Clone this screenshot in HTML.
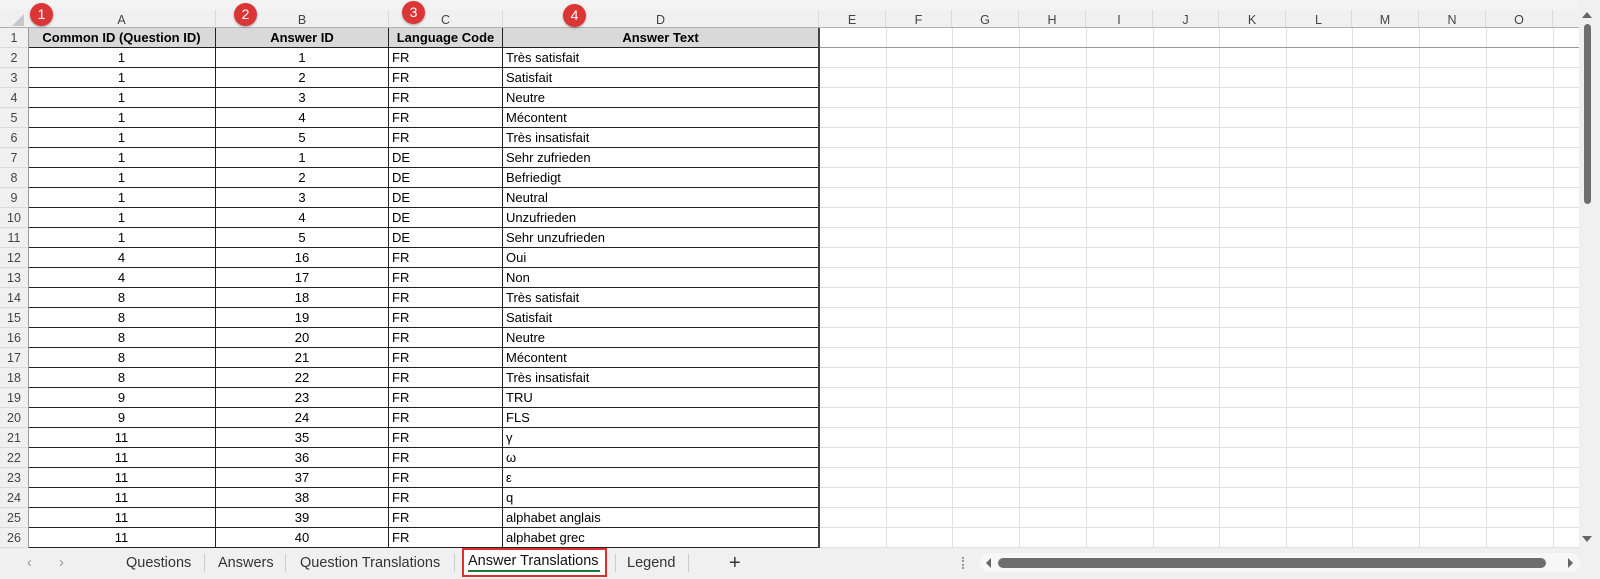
<!DOCTYPE html>
<html><head><meta charset="utf-8"><style>
*{margin:0;padding:0;box-sizing:border-box}
body{width:1600px;height:579px;overflow:hidden;background:#f0f0f0;font-family:"Liberation Sans",sans-serif;position:relative}
.topstrip{position:absolute;left:0;top:0;width:1579px;height:10px;background:#f3f3f3}
.colhdr{position:absolute;top:10px;height:18px;font-size:12.5px;color:#444;text-align:center;line-height:20px;border-right:1px solid #dadada;background:#f0f0f0}
.grid{position:absolute;left:28px;top:28px;width:1551px;height:520px;background:#fff}
.rh{position:absolute;left:0;width:28px;height:20px;font-size:12.5px;color:#444;text-align:center;line-height:20px;background:#f0f0f0;border-bottom:1px solid #dadada}
.c{position:absolute;height:20px;font-size:13px;line-height:19px;color:#000;white-space:nowrap;overflow:hidden;border-right:1px solid #222;border-bottom:1px solid #222}
.ctr{text-align:center}.lft{padding-left:3px}
.h{background:#d9d9d9;font-weight:bold;text-align:center}
.vl{position:absolute;top:28px;width:1px;height:520px;background:#e1e1e1}
.hl{position:absolute;left:819px;width:760px;height:1px;background:#e1e1e1}
.dot{position:absolute;width:23px;height:23px;border-radius:50%;background:#db3535;color:#fff;font-size:14px;text-align:center;line-height:23px;box-shadow:0 1px 2px rgba(0,0,0,.35)}
.tab{position:absolute;top:548px;height:31px;font-size:14.5px;color:#333;line-height:31px}
.sep{position:absolute;top:554px;width:1px;height:18px;background:#ccc}
</style></head><body>
<div class="topstrip"></div>
<div style="position:absolute;left:0;top:10px;width:28px;height:18px;background:#f0f0f0"></div>
<div style="position:absolute;left:12px;top:14px;width:0;height:0;border-left:12px solid transparent;border-bottom:12px solid #c8c8c8"></div>
<div class="colhdr" style="left:28px;width:188px">A</div>
<div class="colhdr" style="left:216px;width:173px">B</div>
<div class="colhdr" style="left:389px;width:114px">C</div>
<div class="colhdr" style="left:503px;width:316px">D</div>
<div class="colhdr" style="left:819px;width:67px">E</div>
<div class="colhdr" style="left:886px;width:66px">F</div>
<div class="colhdr" style="left:952px;width:67px">G</div>
<div class="colhdr" style="left:1019px;width:67px">H</div>
<div class="colhdr" style="left:1086px;width:67px">I</div>
<div class="colhdr" style="left:1153px;width:66px">J</div>
<div class="colhdr" style="left:1219px;width:67px">K</div>
<div class="colhdr" style="left:1286px;width:66px">L</div>
<div class="colhdr" style="left:1352px;width:67px">M</div>
<div class="colhdr" style="left:1419px;width:67px">N</div>
<div class="colhdr" style="left:1486px;width:67px">O</div>
<div class="colhdr" style="left:1553px;width:26px;border-right:none"></div>
<div style="position:absolute;left:0;top:27px;width:1579px;height:1px;background:#b0b0b0"></div>
<div class="grid"></div>
<div class="vl" style="left:886px"></div><div class="vl" style="left:952px"></div><div class="vl" style="left:1019px"></div><div class="vl" style="left:1086px"></div><div class="vl" style="left:1153px"></div><div class="vl" style="left:1219px"></div><div class="vl" style="left:1286px"></div><div class="vl" style="left:1352px"></div><div class="vl" style="left:1419px"></div><div class="vl" style="left:1486px"></div><div class="vl" style="left:1553px"></div>
<div class="hl" style="top:67px"></div><div class="hl" style="top:87px"></div><div class="hl" style="top:107px"></div><div class="hl" style="top:127px"></div><div class="hl" style="top:147px"></div><div class="hl" style="top:167px"></div><div class="hl" style="top:187px"></div><div class="hl" style="top:207px"></div><div class="hl" style="top:227px"></div><div class="hl" style="top:247px"></div><div class="hl" style="top:267px"></div><div class="hl" style="top:287px"></div><div class="hl" style="top:307px"></div><div class="hl" style="top:327px"></div><div class="hl" style="top:347px"></div><div class="hl" style="top:367px"></div><div class="hl" style="top:387px"></div><div class="hl" style="top:407px"></div><div class="hl" style="top:427px"></div><div class="hl" style="top:447px"></div><div class="hl" style="top:467px"></div><div class="hl" style="top:487px"></div><div class="hl" style="top:507px"></div><div class="hl" style="top:527px"></div><div class="hl" style="top:547px"></div>
<div class="hl" style="top:47px;background:#999"></div>

<div class="rh" style="top:28px">1</div>
<div class="c h" style="left:28px;top:28px;width:188px">Common ID (Question ID)</div>
<div class="c h" style="left:216px;top:28px;width:173px">Answer ID</div>
<div class="c h" style="left:389px;top:28px;width:114px">Language Code</div>
<div class="c h" style="left:503px;top:28px;width:316px">Answer Text</div>

<div class="rh" style="top:48px">2</div><div class="c ctr" style="left:28px;top:48px;width:188px">1</div><div class="c ctr" style="left:216px;top:48px;width:173px">1</div><div class="c lft" style="left:389px;top:48px;width:114px">FR</div><div class="c lft" style="left:503px;top:48px;width:316px">Très satisfait</div>
<div class="rh" style="top:68px">3</div><div class="c ctr" style="left:28px;top:68px;width:188px">1</div><div class="c ctr" style="left:216px;top:68px;width:173px">2</div><div class="c lft" style="left:389px;top:68px;width:114px">FR</div><div class="c lft" style="left:503px;top:68px;width:316px">Satisfait</div>
<div class="rh" style="top:88px">4</div><div class="c ctr" style="left:28px;top:88px;width:188px">1</div><div class="c ctr" style="left:216px;top:88px;width:173px">3</div><div class="c lft" style="left:389px;top:88px;width:114px">FR</div><div class="c lft" style="left:503px;top:88px;width:316px">Neutre</div>
<div class="rh" style="top:108px">5</div><div class="c ctr" style="left:28px;top:108px;width:188px">1</div><div class="c ctr" style="left:216px;top:108px;width:173px">4</div><div class="c lft" style="left:389px;top:108px;width:114px">FR</div><div class="c lft" style="left:503px;top:108px;width:316px">Mécontent</div>
<div class="rh" style="top:128px">6</div><div class="c ctr" style="left:28px;top:128px;width:188px">1</div><div class="c ctr" style="left:216px;top:128px;width:173px">5</div><div class="c lft" style="left:389px;top:128px;width:114px">FR</div><div class="c lft" style="left:503px;top:128px;width:316px">Très insatisfait</div>
<div class="rh" style="top:148px">7</div><div class="c ctr" style="left:28px;top:148px;width:188px">1</div><div class="c ctr" style="left:216px;top:148px;width:173px">1</div><div class="c lft" style="left:389px;top:148px;width:114px">DE</div><div class="c lft" style="left:503px;top:148px;width:316px">Sehr zufrieden</div>
<div class="rh" style="top:168px">8</div><div class="c ctr" style="left:28px;top:168px;width:188px">1</div><div class="c ctr" style="left:216px;top:168px;width:173px">2</div><div class="c lft" style="left:389px;top:168px;width:114px">DE</div><div class="c lft" style="left:503px;top:168px;width:316px">Befriedigt</div>
<div class="rh" style="top:188px">9</div><div class="c ctr" style="left:28px;top:188px;width:188px">1</div><div class="c ctr" style="left:216px;top:188px;width:173px">3</div><div class="c lft" style="left:389px;top:188px;width:114px">DE</div><div class="c lft" style="left:503px;top:188px;width:316px">Neutral</div>
<div class="rh" style="top:208px">10</div><div class="c ctr" style="left:28px;top:208px;width:188px">1</div><div class="c ctr" style="left:216px;top:208px;width:173px">4</div><div class="c lft" style="left:389px;top:208px;width:114px">DE</div><div class="c lft" style="left:503px;top:208px;width:316px">Unzufrieden</div>
<div class="rh" style="top:228px">11</div><div class="c ctr" style="left:28px;top:228px;width:188px">1</div><div class="c ctr" style="left:216px;top:228px;width:173px">5</div><div class="c lft" style="left:389px;top:228px;width:114px">DE</div><div class="c lft" style="left:503px;top:228px;width:316px">Sehr unzufrieden</div>
<div class="rh" style="top:248px">12</div><div class="c ctr" style="left:28px;top:248px;width:188px">4</div><div class="c ctr" style="left:216px;top:248px;width:173px">16</div><div class="c lft" style="left:389px;top:248px;width:114px">FR</div><div class="c lft" style="left:503px;top:248px;width:316px">Oui</div>
<div class="rh" style="top:268px">13</div><div class="c ctr" style="left:28px;top:268px;width:188px">4</div><div class="c ctr" style="left:216px;top:268px;width:173px">17</div><div class="c lft" style="left:389px;top:268px;width:114px">FR</div><div class="c lft" style="left:503px;top:268px;width:316px">Non</div>
<div class="rh" style="top:288px">14</div><div class="c ctr" style="left:28px;top:288px;width:188px">8</div><div class="c ctr" style="left:216px;top:288px;width:173px">18</div><div class="c lft" style="left:389px;top:288px;width:114px">FR</div><div class="c lft" style="left:503px;top:288px;width:316px">Très satisfait</div>
<div class="rh" style="top:308px">15</div><div class="c ctr" style="left:28px;top:308px;width:188px">8</div><div class="c ctr" style="left:216px;top:308px;width:173px">19</div><div class="c lft" style="left:389px;top:308px;width:114px">FR</div><div class="c lft" style="left:503px;top:308px;width:316px">Satisfait</div>
<div class="rh" style="top:328px">16</div><div class="c ctr" style="left:28px;top:328px;width:188px">8</div><div class="c ctr" style="left:216px;top:328px;width:173px">20</div><div class="c lft" style="left:389px;top:328px;width:114px">FR</div><div class="c lft" style="left:503px;top:328px;width:316px">Neutre</div>
<div class="rh" style="top:348px">17</div><div class="c ctr" style="left:28px;top:348px;width:188px">8</div><div class="c ctr" style="left:216px;top:348px;width:173px">21</div><div class="c lft" style="left:389px;top:348px;width:114px">FR</div><div class="c lft" style="left:503px;top:348px;width:316px">Mécontent</div>
<div class="rh" style="top:368px">18</div><div class="c ctr" style="left:28px;top:368px;width:188px">8</div><div class="c ctr" style="left:216px;top:368px;width:173px">22</div><div class="c lft" style="left:389px;top:368px;width:114px">FR</div><div class="c lft" style="left:503px;top:368px;width:316px">Très insatisfait</div>
<div class="rh" style="top:388px">19</div><div class="c ctr" style="left:28px;top:388px;width:188px">9</div><div class="c ctr" style="left:216px;top:388px;width:173px">23</div><div class="c lft" style="left:389px;top:388px;width:114px">FR</div><div class="c lft" style="left:503px;top:388px;width:316px">TRU</div>
<div class="rh" style="top:408px">20</div><div class="c ctr" style="left:28px;top:408px;width:188px">9</div><div class="c ctr" style="left:216px;top:408px;width:173px">24</div><div class="c lft" style="left:389px;top:408px;width:114px">FR</div><div class="c lft" style="left:503px;top:408px;width:316px">FLS</div>
<div class="rh" style="top:428px">21</div><div class="c ctr" style="left:28px;top:428px;width:188px">11</div><div class="c ctr" style="left:216px;top:428px;width:173px">35</div><div class="c lft" style="left:389px;top:428px;width:114px">FR</div><div class="c lft" style="left:503px;top:428px;width:316px">γ</div>
<div class="rh" style="top:448px">22</div><div class="c ctr" style="left:28px;top:448px;width:188px">11</div><div class="c ctr" style="left:216px;top:448px;width:173px">36</div><div class="c lft" style="left:389px;top:448px;width:114px">FR</div><div class="c lft" style="left:503px;top:448px;width:316px">ω</div>
<div class="rh" style="top:468px">23</div><div class="c ctr" style="left:28px;top:468px;width:188px">11</div><div class="c ctr" style="left:216px;top:468px;width:173px">37</div><div class="c lft" style="left:389px;top:468px;width:114px">FR</div><div class="c lft" style="left:503px;top:468px;width:316px">ε</div>
<div class="rh" style="top:488px">24</div><div class="c ctr" style="left:28px;top:488px;width:188px">11</div><div class="c ctr" style="left:216px;top:488px;width:173px">38</div><div class="c lft" style="left:389px;top:488px;width:114px">FR</div><div class="c lft" style="left:503px;top:488px;width:316px">q</div>
<div class="rh" style="top:508px">25</div><div class="c ctr" style="left:28px;top:508px;width:188px">11</div><div class="c ctr" style="left:216px;top:508px;width:173px">39</div><div class="c lft" style="left:389px;top:508px;width:114px">FR</div><div class="c lft" style="left:503px;top:508px;width:316px">alphabet anglais</div>
<div class="rh" style="top:528px">26</div><div class="c ctr" style="left:28px;top:528px;width:188px">11</div><div class="c ctr" style="left:216px;top:528px;width:173px">40</div><div class="c lft" style="left:389px;top:528px;width:114px">FR</div><div class="c lft" style="left:503px;top:528px;width:316px">alphabet grec</div>
<div style="position:absolute;left:28px;top:28px;width:1px;height:520px;background:#999"></div>
<div style="position:absolute;left:818px;top:28px;width:2px;height:520px;background:#444"></div>

<div class="dot" style="left:30px;top:3px">1</div>
<div class="dot" style="left:234px;top:3px">2</div>
<div class="dot" style="left:402px;top:1px">3</div>
<div class="dot" style="left:563px;top:4px">4</div>

<div style="position:absolute;left:1582px;top:12px;width:0;height:0;border-left:5px solid transparent;border-right:5px solid transparent;border-bottom:6px solid #666"></div>
<div style="position:absolute;left:1584px;top:24px;width:7px;height:180px;border-radius:4px;background:#6e6e6e"></div>
<div style="position:absolute;left:1582px;top:536px;width:0;height:0;border-left:5px solid transparent;border-right:5px solid transparent;border-top:6px solid #666"></div>

<div class="tab" style="left:27px;color:#999">&#x2039;</div>
<div class="tab" style="left:59px;color:#999">&#x203A;</div>
<div class="tab" style="left:126px">Questions</div>
<div class="sep" style="left:204px"></div>
<div class="tab" style="left:218px">Answers</div>
<div class="sep" style="left:285px"></div>
<div class="tab" style="left:300px">Question Translations</div>
<div class="sep" style="left:454px"></div>
<div style="position:absolute;left:462px;top:548px;width:145px;height:29px;border:2px solid #e0302e;background:#fff"></div>
<div class="tab" style="left:468px;top:546px;color:#111">Answer Translations</div>
<div style="position:absolute;left:468px;top:570px;width:132px;height:2px;background:#1e7a3a"></div>
<div class="sep" style="left:615px"></div>
<div class="tab" style="left:627px">Legend</div>
<div class="sep" style="left:688px"></div>
<div class="tab" style="left:729px;font-size:20px">+</div>
<div style="position:absolute;left:962px;top:557px;width:2px;height:12px;border-left:2px dotted #999"></div>
<div style="position:absolute;left:980px;top:553px;width:600px;height:19px;border-radius:9px;background:#f7f7f7"></div>
<div style="position:absolute;left:986px;top:558px;width:0;height:0;border-top:5px solid transparent;border-bottom:5px solid transparent;border-right:5px solid #666"></div>
<div style="position:absolute;left:998px;top:558px;width:548px;height:10px;border-radius:5px;background:#6e6e6e"></div>
<div style="position:absolute;left:1568px;top:558px;width:0;height:0;border-top:5px solid transparent;border-bottom:5px solid transparent;border-left:5px solid #666"></div>
</body></html>
